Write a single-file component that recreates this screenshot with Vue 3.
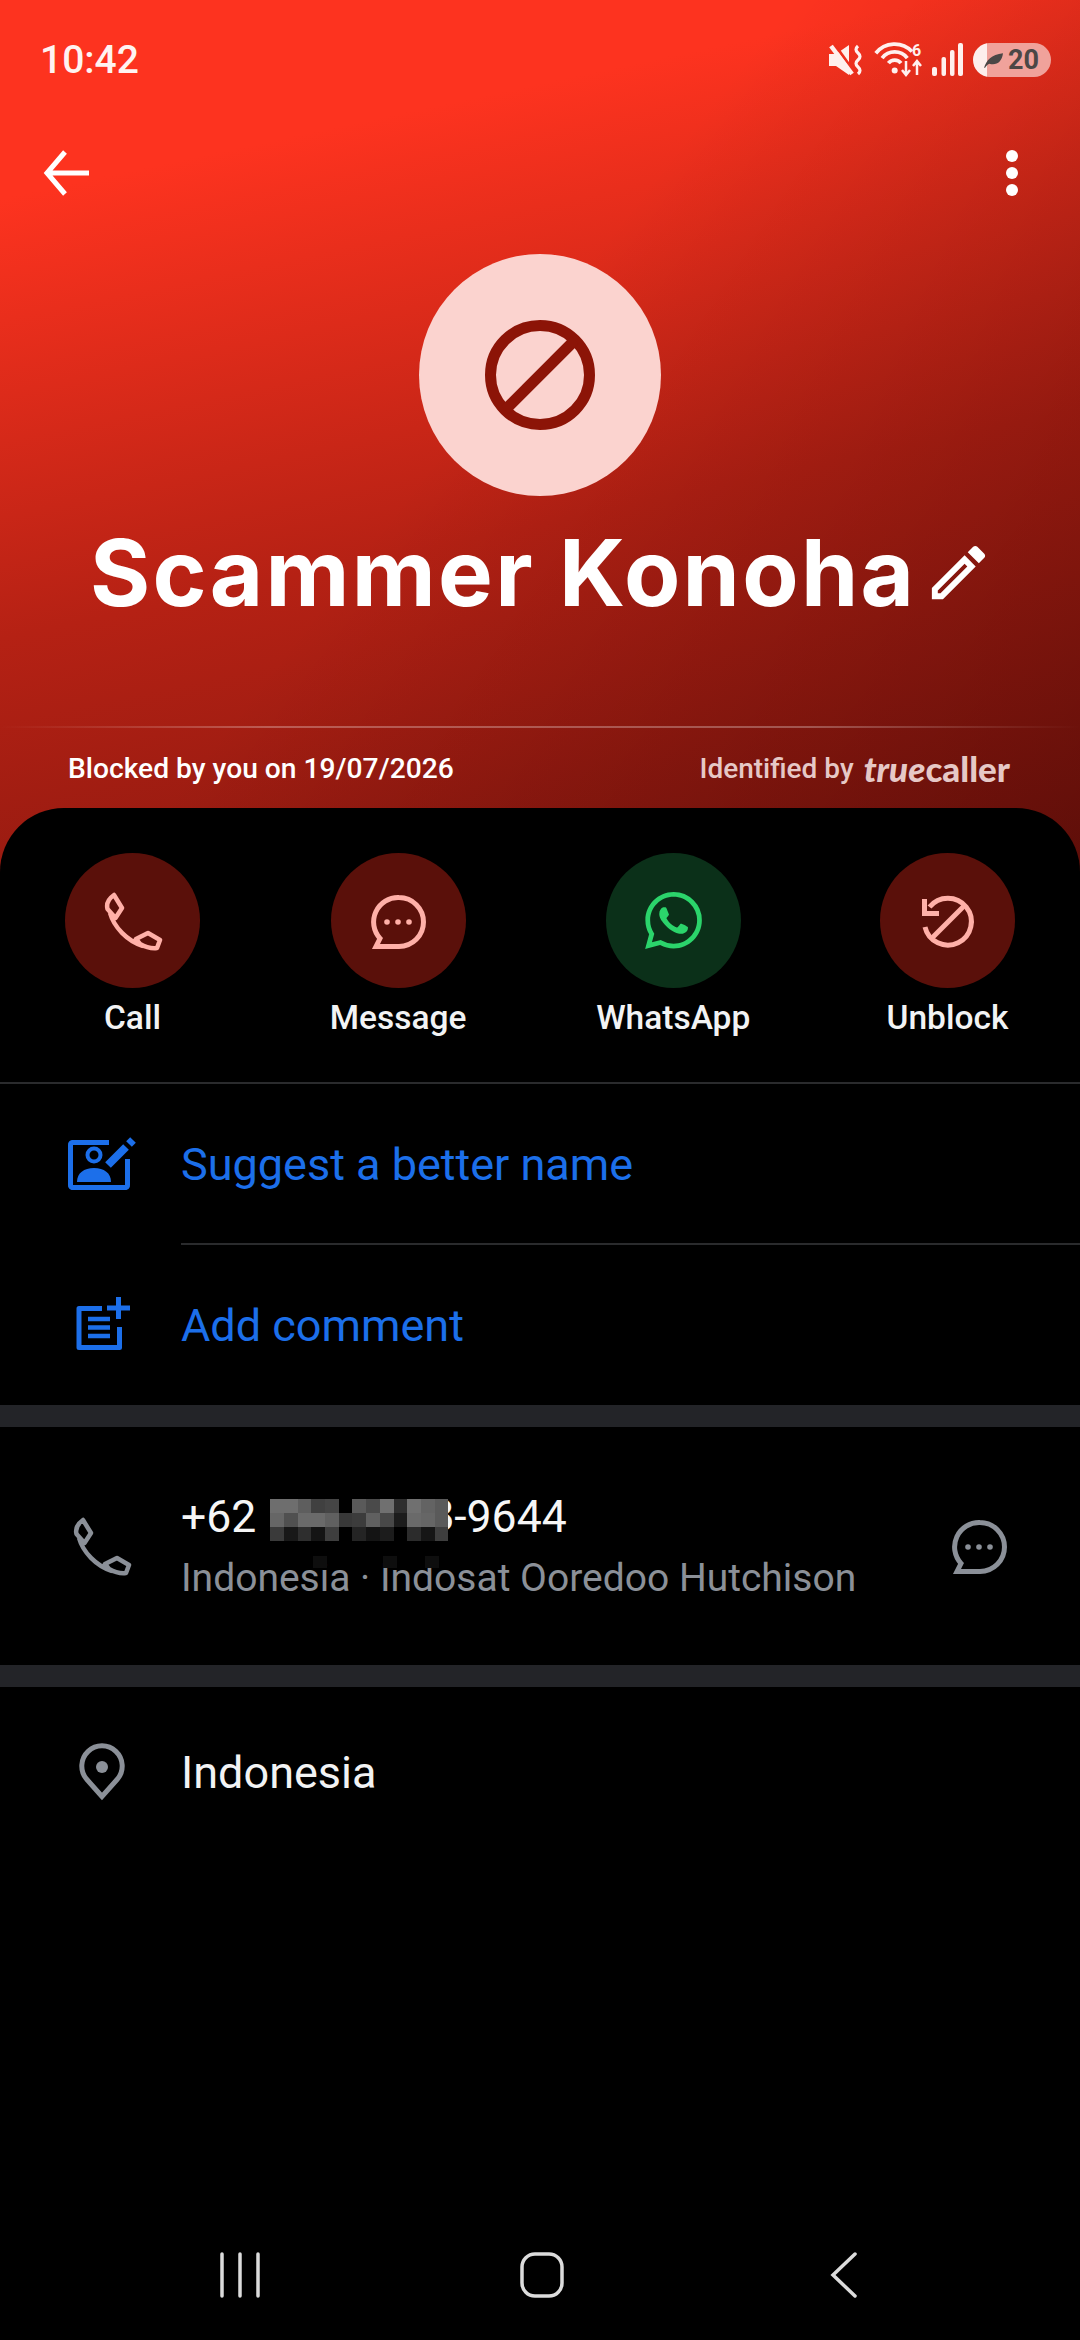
<template>
  <div class="phone">
    <header class="head">
      <div class="status">
        <span class="time">10:42</span>
        <div class="status-icons">
          <svg width="36" height="34" viewBox="0 0 36 34">
            <path d="M1 11H8L21 2V32L8 23H1Z" fill="#fff0ee" />
            <path d="M7 2 27 30" stroke="#ee2f1e" stroke-width="3" />
            <path d="M3 3 24 31" stroke="#fff0ee" stroke-width="4.500" />
            <path d="M30 3q-4 3.500 0 7t0 7 0 7 0 7" fill="none" stroke="#fff0ee" stroke-width="3.200" />
          </svg>
          <svg class="wifi" width="48" height="38" viewBox="0 -4 48 38">
            <g fill="none" stroke="#fff0ee" stroke-width="3.800">
              <path d="M1.800 10.200A24 24 0 0 1 38 8.500" />
              <path d="M8.100 15.100A16 16 0 0 1 33.300 15.100" />
              <path d="M14.400 20.100A8 8 0 0 1 27 20.100" />
            </g>
            <circle cx="20.700" cy="27.500" r="3" fill="#fff0ee" />
            <text x="38" y="13" class="wifi-num">6</text>
            <path d="M32 18V31M28 27l4 5 4-5M43 32V19M39 23l4-5 4 5" fill="none" stroke="#fff0ee" stroke-width="2.500" />
          </svg>
          <svg width="31" height="34" viewBox="0 0 31 34">
            <rect x="0" y="24" width="5" height="9" rx="2" fill="#fff0ee" />
            <rect x="9.500" y="14" width="4.500" height="19" rx="2" fill="#fff0ee" />
            <rect x="18" y="7" width="4.500" height="26" rx="2" fill="#fff0ee" />
            <rect x="26" y="0" width="5" height="33" rx="2" fill="#fff0ee" />
          </svg>
          <div class="battery">
            <svg width="20" height="17" viewBox="0 0 19 16">
              <path d="M1 15C3 8 8 2 19 1 18 9 13 13 6 11 4 12 3 13 2 15Z" fill="#4b4746" />
            </svg>
            <span>20</span>
          </div>
        </div>
      </div>

      <div class="toolbar">
        <svg width="50" height="46" viewBox="0 0 50 46">
          <path d="M47 23H5M23 2 5 23l18 21" fill="none" stroke="#fff" stroke-width="5" />
        </svg>
        <svg width="16" height="48" viewBox="0 0 16 48">
          <circle cx="8" cy="7" r="6" fill="#fff" />
          <circle cx="8" cy="24" r="6" fill="#fff" />
          <circle cx="8" cy="41" r="6" fill="#fff" />
        </svg>
      </div>

      <div class="avatar">
        <svg width="120" height="120" viewBox="0 0 120 120">
          <circle cx="60" cy="60" r="49.500" fill="none" stroke="#8c1407" stroke-width="11" />
          <path d="M95 25 25 95" stroke="#8c1407" stroke-width="11" />
        </svg>
      </div>

      <div class="name-row">
        <span class="name">Scammer Konoha</span>
        <svg class="pencil" width="71" height="71" viewBox="0 0 24 24">
          <path fill="#fff" d="M14.060 9.020l.92.92L5.920 19H5v-.92l9.060-9.060M17.660 3c-.25 0-.51.1-.7.29l-1.830 1.830 3.750 3.750 1.830-1.830c.39-.39.39-1.020 0-1.410l-2.340-2.340c-.2-.2-.45-.29-.71-.29zm-3.600 3.190L3 17.250V21h3.750L17.810 9.940l-3.750-3.750z" />
        </svg>
      </div>

      <div class="head-line"></div>

      <div class="meta">
        <span class="blocked">Blocked by you on 19/07/2026</span>
        <span class="identified">Identified by <span class="tc"><i>true</i><b>caller</b></span></span>
      </div>
    </header>

    <main class="sheet">
      <section class="actions">
        <div v-for="a in actions" :key="a.label" class="action">
          <div class="action-circle" :class="{ green: a.green }">
            <svg v-if="a.icon === 'call'" width="60" height="60" viewBox="0 0 60 60">
              <path :d="phonePath" fill="none" stroke="currentColor" stroke-width="4.500" stroke-linejoin="round" />
            </svg>
            <svg v-else-if="a.icon === 'message'" width="60" height="60" viewBox="0 0 60 60">
              <path :d="bubblePath" fill="none" stroke="currentColor" stroke-width="5" />
              <circle cx="19" cy="31" r="2.800" fill="currentColor" />
              <circle cx="30" cy="31" r="2.800" fill="currentColor" />
              <circle cx="41" cy="31" r="2.800" fill="currentColor" />
            </svg>
            <svg v-else-if="a.icon === 'whatsapp'" width="57" height="57" viewBox="0 0 24 24">
              <path fill="currentColor" d="M17.472 14.382c-.297-.149-1.758-.867-2.030-.967-.273-.099-.471-.148-.67.15-.197.297-.767.966-.94 1.164-.173.199-.347.223-.644.075-.297-.15-1.255-.463-2.390-1.475-.883-.788-1.480-1.761-1.653-2.059-.173-.297-.018-.458.13-.606.134-.133.298-.347.446-.52.149-.174.198-.298.298-.497.099-.198.05-.371-.025-.52-.075-.149-.669-1.612-.916-2.207-.242-.579-.487-.5-.669-.51-.173-.008-.371-.01-.57-.01-.198 0-.52.074-.792.372-.272.297-1.040 1.016-1.040 2.479 0 1.462 1.065 2.875 1.213 3.074.149.198 2.096 3.200 5.077 4.487.709.306 1.262.489 1.694.625.712.227 1.360.195 1.871.118.571-.085 1.758-.719 2.006-1.413.248-.694.248-1.289.173-1.413-.074-.124-.272-.198-.57-.347m-5.421 7.403h-.004a9.870 9.870 0 01-5.031-1.378l-.361-.214-3.741.982.998-3.648-.235-.374a9.860 9.860 0 01-1.510-5.260c.001-5.450 4.436-9.884 9.888-9.884 2.640 0 5.122 1.030 6.988 2.898a9.825 9.825 0 012.893 6.994c-.003 5.450-4.437 9.884-9.885 9.884m8.413-18.297A11.815 11.815 0 0012.050 0C5.495 0 .16 5.335.157 11.892c0 2.096.547 4.142 1.588 5.945L.057 24l6.305-1.654a11.882 11.882 0 005.683 1.448h.005c6.554 0 11.890-5.335 11.893-11.893a11.821 11.821 0 00-3.480-8.413z" />
            </svg>
            <svg v-else width="60" height="60" viewBox="0 0 60 60">
              <g fill="none" stroke="currentColor" stroke-width="5">
                <path d="M12.500 16A23.500 23.500 0 1 1 8 36" />
                <path d="M48 14 14 48" />
                <path d="M7.500 8V22.500H22" />
              </g>
            </svg>
          </div>
          <span class="action-label">{{ a.label }}</span>
        </div>
      </section>

      <div class="row link-row first">
        <div class="slot">
          <svg width="72" height="58" viewBox="0 0 72 58">
            <path d="M43 6.500H6A2.500 2.500 0 0 0 4.500 9V49A2.500 2.500 0 0 0 6 51.500H60A2.500 2.500 0 0 0 61.500 49V23" fill="none" stroke="#1c6fea" stroke-width="5" stroke-linejoin="round" />
            <circle cx="28" cy="19" r="6.500" fill="none" stroke="#1c6fea" stroke-width="4" />
            <path d="M11 46C11 37 18 32 28 32S45 37 45 46Z" fill="#1c6fea" />
            <path d="M42 29 60 11M63 8 67 4" stroke="#1c6fea" stroke-width="8" />
          </svg>
        </div>
        <span class="link-text">Suggest a better name</span>
      </div>
      <div class="row link-row second">
        <div class="slot">
          <svg width="72" height="72" viewBox="0 0 72 72">
            <path d="M36 19.500H13V58.500H53.500V38" fill="none" stroke="#1c6fea" stroke-width="5" stroke-linejoin="round" />
            <path d="M22 30H44M22 38.500H44M22 47H44" stroke="#1c6fea" stroke-width="4.500" />
            <path d="M41 19H64M52.500 8V30" stroke="#1c6fea" stroke-width="5" />
          </svg>
        </div>
        <span class="link-text">Add comment</span>
      </div>

      <div class="band"></div>

      <div class="row number-row">
        <div class="slot">
          <svg width="60" height="60" viewBox="0 0 60 60">
            <path :d="phonePath" fill="none" stroke="#8b9098" stroke-width="4.500" stroke-linejoin="round" />
          </svg>
        </div>
        <div class="number-text">
          <div class="number">
            +62 <span class="mask"><span class="peek">8</span><span class="cells"><span v-for="(c, i) in maskCells" :key="i" :style="{ background: c }"></span></span></span>-9644
          </div>
          <div class="carrier">
            Indonesia · Indosat Ooredoo Hutchison
            <span v-for="x in maskSpots" :key="x" class="spot" :style="{ left: x + 'px' }"></span>
          </div>
        </div>
        <svg class="msg" width="60" height="60" viewBox="0 0 60 60">
          <path :d="bubblePath" fill="none" stroke="#8b9098" stroke-width="5" />
          <circle cx="19" cy="31" r="2.800" fill="#8b9098" />
          <circle cx="30" cy="31" r="2.800" fill="#8b9098" />
          <circle cx="41" cy="31" r="2.800" fill="#8b9098" />
        </svg>
      </div>

      <div class="band"></div>

      <div class="row location-row">
        <div class="slot">
          <svg width="72" height="72" viewBox="0 0 72 72">
            <path d="M36 60.500 20.500 43A20.200 20.200 0 1 1 51.500 43Z" fill="none" stroke="#8b9098" stroke-width="5" />
            <circle cx="36" cy="31" r="6" fill="#8b9098" />
          </svg>
        </div>
        <span class="location">Indonesia</span>
      </div>
    </main>

    <nav class="navbar">
      <div class="nav-item">
        <svg width="42" height="46" viewBox="0 0 42 46">
          <path d="M3 2V44M21 2V44M39 2V44" stroke="#dcdcdc" stroke-width="3.500" stroke-linecap="round" />
        </svg>
      </div>
      <div class="nav-item">
        <svg width="44" height="46" viewBox="0 0 44 46">
          <rect x="2" y="2" width="40" height="42" rx="13" fill="none" stroke="#dcdcdc" stroke-width="3.500" />
        </svg>
      </div>
      <div class="nav-item">
        <svg width="28" height="46" viewBox="0 0 28 46">
          <path d="M25 2 3 23 25 44" fill="none" stroke="#dcdcdc" stroke-width="3.500" stroke-linecap="round" />
        </svg>
      </div>
    </nav>
  </div>
</template>

<script setup>
// two closed ear pieces joined by one curved line
const phonePath =
  "M11 4 19 17 12.500 27 4.500 18Q2.500 10 11 4ZM7 22C11 36 24 50 40 55M33 48 45 42 57 49 54 57Q46 58 37 53Z";
const bubblePath =
  "M31 6.500A24.500 24.500 0 0 1 31 55.500H8L12 47.500A24.500 24.500 0 0 1 31 6.500Z";

const actions = [
  { label: "Call", icon: "call" },
  { label: "Message", icon: "message" },
  { label: "WhatsApp", icon: "whatsapp", green: true },
  { label: "Unblock", icon: "unblock" },
];

// pixelated number, row by row
const maskCells = [
  "#6e6e6e", "#6e6e6e", "#5e5e5e", "#404040", "#454545", "#000", "#5a5a5a", "#4a4a4a", "#707070", "#2e2e2e", "#707070", "#636363", "#5a5a5a",
  "#666", "#505050", "#6a6a6a", "#6a6a6a", "#606060", "#383838", "#3c3c3c", "#606060", "#484848", "#1c1c1c", "#6a6a6a", "#666", "#5a5a5a",
  "#3a3a3a", "#181818", "#2e2e2e", "#141414", "#3e3e3e", "#000", "#242424", "#141414", "#1c1c1c", "#000", "#2c2c2c", "#161616", "#3e3e3e",
];
const maskSpots = [132, 202, 244];
</script>

<style>
body {
  margin: 0;
  background: #000;
}
</style>

<style scoped>
.phone {
  width: 1080px;
  height: 2340px;
  background: #000;
  display: flex;
  flex-direction: column;
  overflow: hidden;
  font-family: Roboto, sans-serif;
  color: #fff;
}

.head {
  height: 872px;
  flex-shrink: 0;
  box-sizing: border-box;
  background:
    linear-gradient(128deg, rgba(0, 0, 0, 0) 45%, rgba(40, 0, 0, 0.38) 100%),
    linear-gradient(168deg, #fd331f 18%, #b52114 58%, #7f160e 100%);
}

.status {
  height: 120px;
  box-sizing: border-box;
  padding: 0 29px 0 40px;
  display: flex;
  align-items: center;
  justify-content: space-between;
}

.time {
  font-size: 39px;
  font-weight: 500;
  color: #fff3f1;
}

.status-icons {
  display: flex;
  align-items: center;
  gap: 10px;
}

.wifi {
  margin-top: -4px;
}

.wifi-num {
  font: 700 16px Roboto, sans-serif;
  fill: #fff0ee;
}

.battery {
  width: 78px;
  height: 34px;
  border-radius: 17px;
  background: linear-gradient(90deg, #fdeeec 14px, #f0a29b 14px);
  display: flex;
  align-items: center;
  padding-left: 10px;
  box-sizing: border-box;
  gap: 5px;
  font: 700 27px Roboto, sans-serif;
  color: #4b4746;
}

.toolbar {
  height: 106px;
  box-sizing: border-box;
  padding: 0 60px 0 42px;
  display: flex;
  align-items: center;
  justify-content: space-between;
}

.avatar {
  width: 242px;
  height: 242px;
  border-radius: 50%;
  background: #fbd3cf;
  margin: 28px auto 0;
  display: flex;
  align-items: center;
  justify-content: center;
}

.name-row {
  height: 110px;
  margin-top: 21px;
  padding-left: 90px;
  display: flex;
  align-items: center;
}

.name {
  font-family: Inter, sans-serif;
  font-size: 92px;
  font-weight: 700;
  letter-spacing: 2.300px;
  white-space: nowrap;
}

.pencil {
  margin-left: 7px;
}

.head-line {
  height: 2px;
  margin-top: 99px;
  background: linear-gradient(90deg, rgba(255, 255, 255, 0) 0, rgba(255, 255, 255, 0.28) 25%, rgba(255, 255, 255, 0.28) 75%, rgba(255, 255, 255, 0) 100%);
}

.meta {
  height: 80px;
  box-sizing: border-box;
  padding: 0 70px 0 68px;
  display: flex;
  align-items: center;
  justify-content: space-between;
}

.blocked {
  font-size: 28.200px;
  font-weight: 500;
}

.identified {
  font-size: 28px;
  font-weight: 500;
  color: #e6c8c6;
  display: flex;
  align-items: center;
  gap: 10px;
}

.tc {
  font-family: Lato, sans-serif;
  font-size: 35px;
  font-weight: 900;
  line-height: 1;
}

.tc i {
  font-style: italic;
  font-weight: 900;
}

.tc b {
  font-weight: 900;
}

.sheet {
  flex: 1;
  margin-top: -64px;
  background: #000;
  border-radius: 64px 64px 0 0;
  display: flex;
  flex-direction: column;
}

.actions {
  box-sizing: border-box;
  height: 276px;
  padding: 45px 65px 0;
  display: flex;
  justify-content: space-between;
  border-bottom: 2px solid #2a2b2d;
}

.action {
  display: flex;
  flex-direction: column;
  align-items: center;
  gap: 10px;
}

.action-circle {
  width: 135px;
  height: 135px;
  border-radius: 50%;
  background: #5a100a;
  color: #ffb0a8;
  display: flex;
  align-items: center;
  justify-content: center;
}

.action-circle.green {
  background: #0b3019;
  color: #2bd46b;
}

.action-label {
  font-size: 33.500px;
  line-height: 40px;
  font-weight: 500;
  color: #f2f3f4;
  white-space: nowrap;
}

.row {
  display: flex;
  align-items: center;
}

.slot {
  width: 72px;
  margin: 0 43px 0 66px;
  flex-shrink: 0;
  display: flex;
  justify-content: center;
}

.link-row.first {
  height: 161px;
  position: relative;
}

.link-row.first::after {
  content: "";
  position: absolute;
  left: 181px;
  right: 0;
  bottom: 0;
  height: 2px;
  background: #2a2b2d;
}

.link-row.second {
  height: 160px;
}

.link-text {
  font-size: 45px;
  color: #1c6fea;
}

.band {
  height: 22px;
  background: #232428;
  flex-shrink: 0;
}

.number-row {
  height: 238px;
}

.number-text {
  flex: 1;
  align-self: flex-start;
  margin-top: 60px;
}

.number {
  font-size: 44.500px;
  line-height: 60px;
  color: #f6f6f6;
  white-space: nowrap;
}

.mask {
  display: inline-block;
  position: relative;
  width: 184px;
  height: 42px;
  margin-left: 3px;
  vertical-align: -9px;
}

.peek {
  position: absolute;
  right: 0;
  top: -13px;
}

.cells {
  position: absolute;
  left: 0;
  top: 0;
  width: 178px;
  height: 42px;
  display: grid;
  grid-template-columns: repeat(13, 1fr);
  grid-template-rows: repeat(3, 1fr);
}

.carrier {
  position: relative;
  margin-top: 9px;
  font-size: 39px;
  line-height: 44px;
  color: #8b9098;
  white-space: nowrap;
}

.spot {
  position: absolute;
  top: 0;
  width: 14px;
  height: 12px;
  background: #0e0e0e;
}

.msg {
  margin-right: 71px;
  flex-shrink: 0;
}

.location-row {
  height: 170px;
}

.location {
  font-size: 45px;
  color: #f2f3f4;
}

.navbar {
  height: 130px;
  flex-shrink: 0;
  box-sizing: border-box;
  padding-left: 4px;
  display: flex;
  justify-content: center;
}

.nav-item {
  width: 302px;
  display: flex;
  align-items: center;
  justify-content: center;
}
</style>
